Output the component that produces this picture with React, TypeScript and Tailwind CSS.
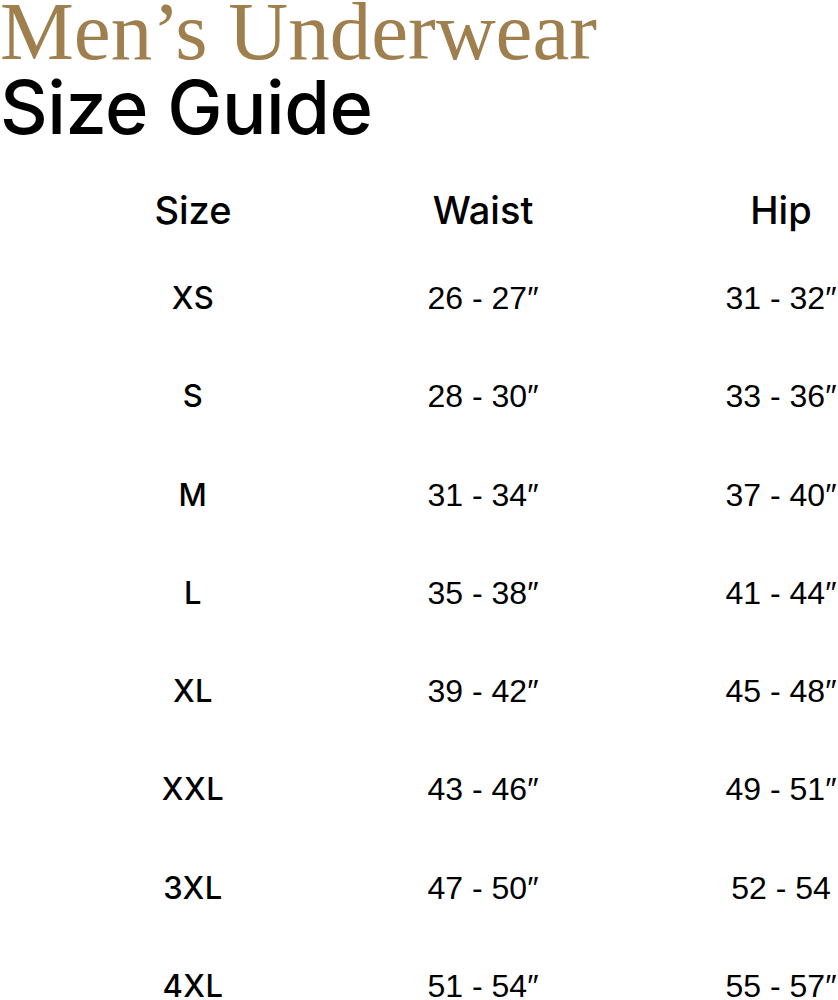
import React from "react";

const rows: [string, string, string][] = [
  ["XS", "26 - 27″", "31 - 32″"],
  ["S", "28 - 30″", "33 - 36″"],
  ["M", "31 - 34″", "37 - 40″"],
  ["L", "35 - 38″", "41 - 44″"],
  ["XL", "39 - 42″", "45 - 48″"],
  ["XXL", "43 - 46″", "49 - 51″"],
  ["3XL", "47 - 50″", "52 - 54"],
  ["4XL", "51 - 54″", "55 - 57″"],
];

export default function App() {
  return (
    <div className="w-[838px] h-[1000px] overflow-hidden bg-white text-black">
      <h1 className="font-['Liberation_Serif',serif] text-[83px] leading-[62px] text-[#9e7f4d] whitespace-nowrap">
        Men’s Underwear
      </h1>
      <h2 className="font-['Inter','Liberation_Sans',sans-serif] mt-[3px] text-[74px] leading-[84px] font-medium tracking-[-0.5px] whitespace-nowrap">
        Size Guide
      </h2>
      <div className="grid grid-cols-[386px_194px_1fr] mt-[45px] font-['Liberation_Sans',Arial,sans-serif]">
        <div className="font-['Inter',sans-serif] text-center text-[38px] leading-[32px] font-medium">Size</div>
        <div className="font-['Inter',sans-serif] text-center text-[38px] leading-[32px] font-medium">Waist</div>
        <div className="font-['Inter',sans-serif] text-center text-[38px] leading-[32px] font-medium pl-[144px]">Hip</div>
        {rows.map((r, i) => (
          <React.Fragment key={i}>
            <div className={`font-['Inter',sans-serif] text-center text-[31px] leading-[32px] font-medium tracking-[0.5px] ${i === 0 ? "mt-[56px]" : "mt-[66.3px]"}`}>{r[0]}</div>
            <div className={`text-center text-[32px] leading-[32px] ${i === 0 ? "mt-[56px]" : "mt-[66.3px]"}`}>{r[1]}</div>
            <div className={`text-center text-[32px] leading-[32px] pl-[144px] ${i === 0 ? "mt-[56px]" : "mt-[66.3px]"}`}>{r[2]}</div>
          </React.Fragment>
        ))}
      </div>
    </div>
  );
}
